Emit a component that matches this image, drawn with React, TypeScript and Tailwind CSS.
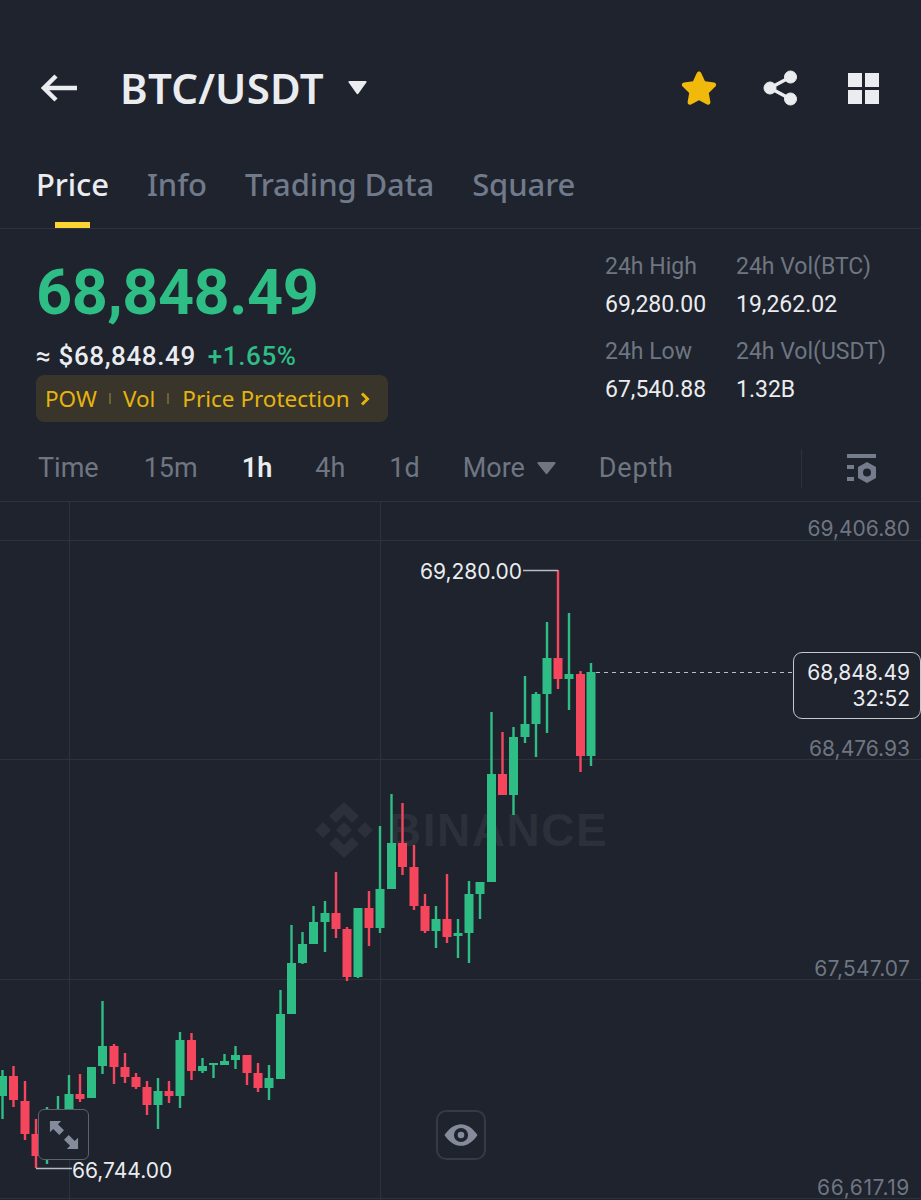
const tabs = ["Price", "Info", "Trading Data", "Square"]

const stats = [
  { label: "24h High", value: "69,280.00" },
  { label: "24h Vol(BTC)", value: "19,262.02" },
  { label: "24h Low", value: "67,540.88" },
  { label: "24h Vol(USDT)", value: "1.32B" },
]

// x, wick top, wick bottom, body top, body bottom (page coordinates)
const up: number[][] = [
  [2.5, 1070, 1119, 1076, 1096],
  [47, 1107, 1164, 1125, 1150],
  [58, 1096, 1130, 1110, 1125],
  [69, 1075, 1115, 1094, 1115],
  [91.5, 1067, 1098, 1067, 1098],
  [102.5, 1001, 1074, 1046, 1066],
  [158, 1078, 1129, 1091, 1105],
  [180, 1032, 1108, 1040, 1096],
  [202.5, 1058, 1073, 1066, 1071],
  [213.5, 1063, 1078, 1063, 1065],
  [224.5, 1054, 1065, 1061, 1065],
  [235.5, 1046, 1069, 1055, 1060],
  [269, 1065, 1100, 1078, 1088],
  [280.5, 990, 1079, 1014, 1079],
  [291.5, 925, 1014, 963, 1014],
  [302.5, 932, 964, 944, 963],
  [313.5, 906, 944, 922, 944],
  [325, 901, 952, 913, 922],
  [358, 908, 978, 908, 977],
  [380, 826, 933, 889, 928],
  [391.5, 794, 889, 843, 889],
  [436, 906, 948, 919, 931],
  [458, 919, 958, 933, 936],
  [469, 881, 963, 894, 933],
  [480, 882, 919, 882, 894],
  [491.5, 712, 882, 774, 882],
  [513.5, 727, 815, 737, 795],
  [525, 676, 743, 724, 737],
  [536, 692, 757, 694, 724],
  [547, 622, 733, 658, 694],
  [569, 613, 710, 674, 679],
  [591, 663, 766, 672, 756],
]

const down: number[][] = [
  [13.5, 1066, 1107, 1076, 1100],
  [25, 1081, 1140, 1101, 1134],
  [36, 1119, 1168, 1134, 1156],
  [80, 1074, 1102, 1094, 1099],
  [114, 1044, 1084, 1046, 1067],
  [125, 1053, 1083, 1067, 1077],
  [136, 1073, 1089, 1077, 1087],
  [147, 1081, 1115, 1087, 1105],
  [169, 1081, 1103, 1091, 1096],
  [191.5, 1033, 1080, 1040, 1071],
  [247, 1055, 1085, 1055, 1073],
  [258, 1063, 1092, 1073, 1088],
  [336, 872, 938, 913, 929],
  [347, 927, 981, 929, 977],
  [369, 891, 946, 908, 928],
  [402.5, 803, 875, 843, 867],
  [414, 845, 910, 867, 906],
  [425, 894, 933, 906, 931],
  [447, 874, 943, 919, 937],
  [502.5, 732, 795, 774, 795],
  [558, 570, 689, 658, 679],
  [580.5, 671, 772, 674, 756],
]

function Candles({ data, color }: { data: number[][]; color: string }) {
  return (
    <g fill={color}>
      {data.map(([x, wt, wb, bt, bb]) => (
        <g key={x}>
          <rect x={x - 1.2} y={wt} width={2.4} height={wb - wt} />
          <rect x={x - 4.5} y={bt} width={9} height={bb - bt} />
        </g>
      ))}
    </g>
  )
}

function Chart() {
  return (
    <div className="relative h-[698px] overflow-hidden font-['Inter',sans-serif] text-[21px]">
      {/* Watermark */}
      <div className="absolute left-[315px] top-[299px] flex items-center gap-[15px] text-[#2b303a]">
        <svg width="58" height="58" viewBox="0 0 58 58" fill="currentColor">
          <path d="M29 1 44 15 37 22 29 14 21 22 14 15Z" />
          <path d="M29 57 14 43 21 36 29 44 37 36 44 43Z" />
          <path d="M29 21 37 29 29 37 21 29Z" />
          <path d="M8 21 16 29 8 37 0 29Z" />
          <path d="M50 21 58 29 50 37 42 29Z" />
        </svg>
        <span className="font-['Liberation_Sans',sans-serif] text-[46px] font-bold leading-[58px] tracking-[1.5px]">BINANCE</span>
      </div>

      <svg className="absolute inset-0" width="921" height="698" viewBox="0 502 921 698">
        <g fill="#2d333d">
          <rect x="0" y="540" width="921" height="1" />
          <rect x="0" y="759" width="921" height="1" />
          <rect x="0" y="979" width="921" height="1" />
          <rect x="0" y="1198" width="921" height="1" />
          <rect x="69" y="502" width="1" height="698" />
          <rect x="380" y="502" width="1" height="698" />
        </g>
        <Candles data={up} color="#2ebd85" />
        <Candles data={down} color="#f6465d" />
        <path d="M523 570.5H558" stroke="#b7bdc6" strokeWidth="1.5" />
        <path d="M36 1168.5H72" stroke="#b7bdc6" strokeWidth="1.5" />
        <path d="M596 672.5H792" stroke="#b7bdc6" strokeWidth="1.2" strokeDasharray="4 4" />
      </svg>

      {/* Axis prices */}
      <span className="absolute right-[11px] top-[11px] text-[#6f7682]">69,406.80</span>
      <span className="absolute right-[11px] top-[231px] text-[#6f7682]">68,476.93</span>
      <span className="absolute right-[11px] top-[451px] tracking-[0.2px] text-[#6f7682]">67,547.07</span>
      <span className="absolute right-[11px] top-[670px] tracking-[0.6px] text-[#6f7682]">66,617.19</span>

      {/* High and low */}
      <span className="absolute left-[420px] top-[54px] text-[#eaecef]">69,280.00</span>
      <span className="absolute left-[72px] top-[653px] text-[#eaecef]">66,744.00</span>

      {/* Last price */}
      <div className="absolute left-[793px] top-[150px] flex h-[67px] w-[128px] flex-col items-end justify-center rounded-[9px] border-[1.5px] border-[#c4c8cf] bg-[#1e232d] pr-[10px] leading-[26px] text-[#eaecef]">
        <span>68,848.49</span>
        <span>32:52</span>
      </div>

      {/* Expand */}
      <button className="absolute left-[38px] top-[607px] flex h-[51px] w-[51px] items-center justify-center rounded-[6px] border border-[#5c626e] bg-[#1e232d]">
        <svg width="30" height="30" viewBox="0 0 32 32" fill="#858b9b">
          <path d="M1 1H13L9.500 4.500 16 11 11 16 4.500 9.500 1 13Z" />
          <path d="M31 31H19L22.500 27.500 16 21 21 16 27.500 22.500 31 19Z" />
        </svg>
      </button>

      {/* Eye */}
      <button className="absolute left-[436px] top-[608px] flex h-[50px] w-[50px] items-center justify-center rounded-[10px] border-2 border-[#343a46]">
        <svg width="34" height="24" viewBox="0 0 36 24" fill="#858b9b">
          <path fillRule="evenodd" d="M0.500 12C6 4 12 0.500 18 0.500S30 4 35.500 12C30 20 24 23.500 18 23.500S6 20 0.500 12ZM18 4.500A7.500 7.500 0 1 0 18 19.500 7.500 7.500 0 1 0 18 4.500ZM18 8.500A3.500 3.500 0 1 1 18 15.500 3.500 3.500 0 1 1 18 8.500Z" />
        </svg>
      </button>
    </div>
  )
}

export default function App() {
  return (
    <div className="h-[1200px] w-[921px] overflow-hidden bg-[#1e232d] font-['Noto_Sans',sans-serif] text-[#eaecef]">
      {/* Header */}
      <div className="flex h-[114px] items-center pl-[41px] pr-[42px] pt-[62px]">
        <svg width="36" height="28" viewBox="0 0 36 28" fill="none" stroke="#eaecef" strokeWidth="4.500">
          <path d="M15 2 3 14 15 26" />
          <path d="M3 14H36" />
        </svg>
        <span className="ml-[43px] text-[42px] font-semibold leading-[52px] tracking-[0.2px]">BTC/USDT</span>
        <svg className="ml-[24px]" width="19" height="14" viewBox="0 0 19 14" fill="#eaecef">
          <path d="M1.500 0H17.500Q19.500 0 18 2L10.500 12.500Q9.500 14 8.500 12.500L1 2Q-0.500 0 1.500 0Z" />
        </svg>
        <div className="ml-auto flex items-center">
          <svg width="36" height="36" viewBox="0 0 36 36" fill="#f0b90b">
            <path d="M18 1.500C19 1.500 19.800 2.200 20.200 3L24 11.300 33 12.600C35 12.900 35.800 15.200 34.400 16.600L27.800 23 29.400 32C29.700 34 27.700 35.400 26 34.500L18 30.200 10 34.500C8.300 35.400 6.300 34 6.600 32L8.200 23 1.600 16.600C0.200 15.200 1 12.900 3 12.600L12 11.300 15.800 3C16.200 2.200 17 1.500 18 1.500Z" />
          </svg>
          <svg className="ml-[46px]" width="35" height="36" viewBox="0 0 35 36" fill="#eaecef" stroke="#eaecef">
            <circle cx="27.500" cy="7" r="6" />
            <circle cx="7" cy="18" r="6" />
            <circle cx="27.500" cy="29" r="6" />
            <path d="M27.500 7 7 18 27.500 29" fill="none" strokeWidth="3.500" />
          </svg>
          <div className="ml-[50px] grid grid-cols-2 gap-[3px]">
            <div className="h-[14px] w-[14px] bg-[#eaecef]" />
            <div className="h-[14px] w-[14px] bg-[#eaecef]" />
            <div className="h-[14px] w-[14px] bg-[#eaecef]" />
            <div className="h-[14px] w-[14px] bg-[#eaecef]" />
          </div>
        </div>
      </div>

      {/* Tabs */}
      <div className="flex h-[115px] items-end gap-[38px] border-b border-[#2d333d] pl-[36px]">
        {tabs.map((tab, i) => (
          <div key={tab} className="flex flex-col items-center">
            <span className={i === 0 ? "text-[31px] font-medium leading-[40px] tracking-[-0.1px] text-[#eaecef]" : "text-[31px] font-medium leading-[40px] tracking-[-0.1px] text-[#707a8a]"}>
              {tab}
            </span>
            <div className={i === 0 ? "mt-[18px] h-[6px] w-[35px] bg-[#fcd535]" : "mt-[18px] h-[6px]"} />
          </div>
        ))}
      </div>

      {/* Price summary */}
      <div className="flex h-[193px] font-['Roboto',sans-serif]">
        <div className="w-[605px] pl-[36px] pt-[29px]">
          <div className="text-[63px] font-bold leading-[70px] tracking-[-0.5px] text-[#2ebd85]">68,848.49</div>
          <div className="mt-[14px] flex h-[28px] items-center text-[26px] font-medium tracking-[0.6px]">
            <span>≈ $68,848.49</span>
            <span className="ml-[12px] text-[#2ebd85]">+1.65%</span>
          </div>
          <div className="mt-[5px] flex h-[47px] w-[352px] items-center rounded-[8px] bg-[#39352a] pl-[9px] font-['Noto_Sans',sans-serif] text-[22.5px] text-[#e5b40f]">
            <span>POW</span>
            <div className="ml-[12px] h-[11px] w-[2px] bg-[#6e6233]" />
            <span className="ml-[12px]">Vol</span>
            <div className="ml-[12px] h-[11px] w-[2px] bg-[#6e6233]" />
            <span className="ml-[13px]">Price Protection</span>
            <svg className="ml-[10px]" width="10" height="14" viewBox="0 0 10 14" fill="none" stroke="#e5b40f" strokeWidth="3">
              <path d="M2 1.500 7.500 7 2 12.500" />
            </svg>
          </div>
        </div>
        <div className="grid grid-cols-[131px_1fr] content-start gap-y-[9px] pt-[19px] text-[23px] leading-[38px]">
          {stats.map((s) => (
            <div key={s.label}>
              <div className="text-[#6f7682]">{s.label}</div>
              <div className="text-[#eaecef]">{s.value}</div>
            </div>
          ))}
        </div>
      </div>

      {/* Interval bar */}
      <div className="flex h-[80px] items-center border-b border-[#2d333d] pl-[38px] pt-[14px] font-['Roboto',sans-serif] text-[27px] text-[#6f7682]">
        <span>Time</span>
        <span className="ml-[45px]">15m</span>
        <span className="ml-[44px] font-semibold text-[#eaecef]">1h</span>
        <span className="ml-[43px]">4h</span>
        <span className="ml-[44px]">1d</span>
        <span className="ml-[43px]">More</span>
        <svg className="ml-[12px]" width="19" height="13" viewBox="0 0 19 13" fill="#6f7682">
          <path d="M1.500 0H17.500Q19.500 0 18 2L10.500 11.500Q9.500 13 8.500 11.500L1 2Q-0.500 0 1.500 0Z" />
        </svg>
        <span className="ml-[43px] tracking-[0.8px]">Depth</span>
        <div className="ml-[127px] h-[39px] w-px bg-[#2d333d]" />
        <svg className="ml-[45px]" width="30" height="30" viewBox="0 0 30 30" fill="#757c8b">
          <rect x="0" y="0" width="29" height="4" />
          <rect x="0" y="11" width="7" height="4" />
          <rect x="0" y="23" width="7" height="4" />
          <path fillRule="evenodd" d="M20 8 29 13V24L20 29 11 24V13ZM20 14.500A4 4 0 1 0 20 22.500 4 4 0 1 0 20 14.500Z" />
        </svg>
      </div>

      <Chart />
    </div>
  )
}
